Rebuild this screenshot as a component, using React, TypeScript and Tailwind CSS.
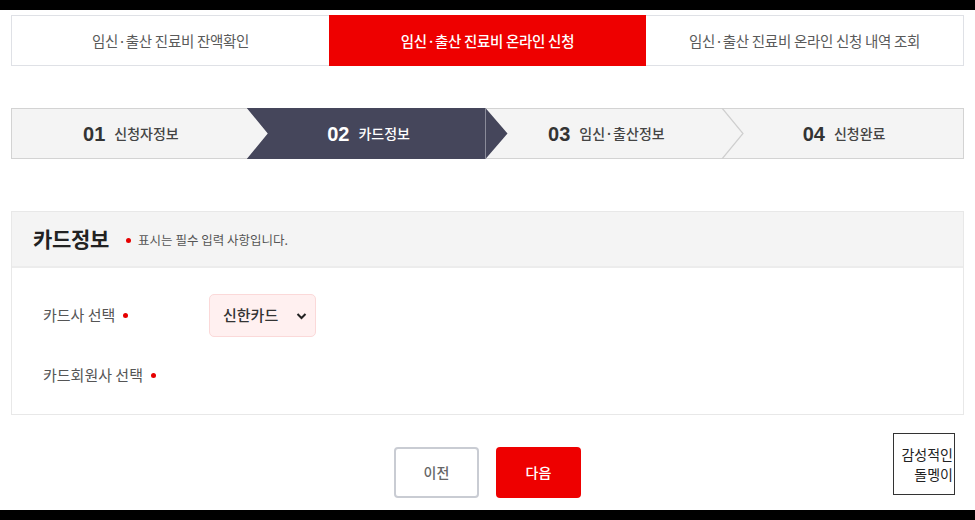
import React from "react";

const font = { fontFamily: '"Noto Sans CJK KR", "Noto Sans", sans-serif' };

function Dot() {
  return <span className="inline-block w-[5px] h-[5px] rounded-full bg-[#e60000]" />;
}

export default function App() {
  return (
    <div className="relative w-[975px] h-[520px] bg-white flex flex-col font-['Noto_Sans_CJK_KR',sans-serif]">
      <div className="h-[10px] bg-black shrink-0" />
      {/* tabs */}
      <div className="mx-[11px] mt-[5px] h-[51px] grid grid-cols-3 border border-[#dfe1e6] text-[14.5px] tracking-[-0.3px]">
        <div className="flex items-center justify-center text-[#5a5a5a]">임신·출산 진료비 잔액확인</div>
        <div className="flex items-center justify-center bg-[#ee0000] text-white font-medium -my-px">임신·출산 진료비 온라인 신청</div>
        <div className="flex items-center justify-center text-[#5a5a5a]">임신·출산 진료비 온라인 신청 내역 조회</div>
      </div>
      {/* steps */}
      <div className="mx-[11px] mt-[42px] h-[51px] flex bg-[#f4f4f4] border border-[#d3d3d3]">
        <div className="flex-1 flex items-center justify-center gap-[9px]">
          <span className="font-['Liberation_Sans',sans-serif] font-bold text-[20px] text-[#333]">01</span>
          <span className="text-[14px] text-[#444] font-medium">신청자정보</span>
        </div>
        <div className="relative flex-1 flex items-center justify-center gap-[9px]">
          <div className="absolute top-[-1px] bottom-[-1px] left-[-3px] right-[-20px] bg-[#45465b] [clip-path:polygon(0_0,calc(100%-22px)_0,100%_50%,calc(100%-22px)_100%,0_100%,21px_50%)]">
            <div className="absolute top-0 bottom-0 right-[22px] w-px bg-[#8a8b99]" />
          </div>
          <span className="relative font-['Liberation_Sans',sans-serif] font-bold text-[20px] text-white">02</span>
          <span className="relative text-[14px] text-white font-medium">카드정보</span>
        </div>
        <div className="relative flex-1 flex items-center justify-center gap-[9px]">
          <span className="font-['Liberation_Sans',sans-serif] font-bold text-[20px] text-[#333]">03</span>
          <span className="text-[14px] text-[#444] font-medium">임신·출산정보</span>
          <svg className="absolute right-[-20px] top-[-1px]" width="24" height="51" viewBox="0 0 24 51">
            <polyline points="1,0 22,25.5 1,51" fill="none" stroke="#cfcfcf" strokeWidth="1.2" />
          </svg>
        </div>
        <div className="flex-1 flex items-center justify-center gap-[9px]">
          <span className="font-['Liberation_Sans',sans-serif] font-bold text-[20px] text-[#333]">04</span>
          <span className="text-[14px] text-[#444] font-medium">신청완료</span>
        </div>
      </div>
      {/* section */}
      <div className="mx-[11px] mt-[52px] border border-[#e8e8e8] flex flex-col">
        <div className="h-[56px] bg-[#f4f4f4] border-b-2 border-[#ececec] flex items-center pl-[21px]">
          <span className="text-[21px] font-bold text-[#222] tracking-[-0.3px]">카드정보</span>
          <span className="ml-[17px] mr-[7px] mt-[3px] flex"><Dot /></span>
          <span className="text-[12.5px] text-[#555] mt-[3px]">표시는 필수 입력 사항입니다.</span>
        </div>
        <div className="flex flex-col pl-[31px] pt-[26px] pb-[29px]">
          <div className="flex items-center h-[43px]">
            <div className="w-[166px] flex items-center gap-[8px] text-[15px] text-[#555]">
              카드사 선택 <Dot />
            </div>
            <div className="w-[107px] h-[43px] rounded-[5px] bg-[#fff0f0] border border-[#fbd9d9] flex items-center pl-[13px] pr-[8px] justify-between">
              <span className="text-[15px] text-[#333] font-medium">신한카드</span>
              <svg width="11" height="8" viewBox="0 0 11 8">
                <polyline points="1.5,2 5.5,6 9.5,2" fill="none" stroke="#222" strokeWidth="2" />
              </svg>
            </div>
          </div>
          <div className="flex items-center gap-[8px] mt-[28px] text-[15px] text-[#555] h-[20px]">
            카드회원사 선택 <Dot />
          </div>
        </div>
      </div>
      {/* buttons */}
      <div className="mt-[32px] flex justify-center gap-[17px]">
        <button className="w-[85px] h-[51px] rounded-[4px] border-2 border-[#c9ccd3] bg-white text-[14px] text-[#666] font-medium">이전</button>
        <button className="w-[85px] h-[51px] rounded-[4px] bg-[#ee0000] text-[14px] text-white font-medium">다음</button>
      </div>
      <div className="mt-auto h-[10px] bg-black shrink-0" />
      {/* watermark */}
      <div className="absolute left-[893px] top-[433px] w-[62px] h-[62px] border border-[#333] bg-white flex flex-col items-end justify-center pr-[1px] text-[14px] leading-[20px] text-[#222]" style={font}>
        <span>감성적인</span>
        <span>돌멩이</span>
      </div>
    </div>
  );
}
